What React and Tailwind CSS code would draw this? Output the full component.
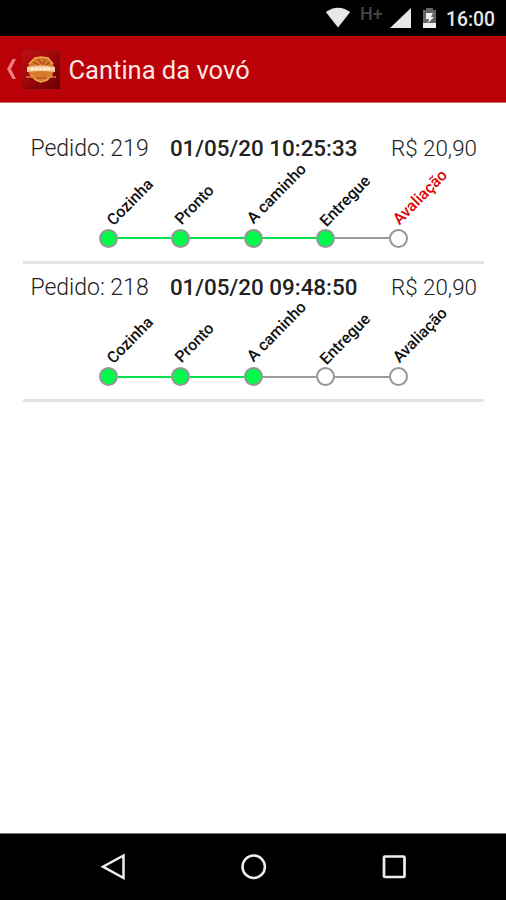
import clsx from 'clsx';

const orders = [
  { id: 219, date: '01/05/20 10:25:33', total: 'R$ 20,90', done: 4, pendingReview: true },
  { id: 218, date: '01/05/20 09:48:50', total: 'R$ 20,90', done: 3, pendingReview: false },
];

const steps = [
  { label: 'Cozinha', offset: 'bottom-[16px] left-[16px]' },
  { label: 'Pronto', offset: 'bottom-[17px] left-[12px]' },
  { label: 'A caminho', offset: 'bottom-[18px] left-[11px]' },
  { label: 'Entregue', offset: 'bottom-[15px] left-[12px]' },
  { label: 'Avaliação', offset: 'bottom-[17px] left-[12px]' },
];

function StatusBar() {
  return (
    <div className="flex h-9 shrink-0 items-center bg-black pl-[325px] text-[#e8e8e8]">
      <svg className="h-9 w-[115px]" viewBox="0 0 115 36">
        <path d="M0.8 12 Q13 3.5 25.2 12 L13 27.5 Z" fill="#e8e8e8" />
        <path d="M86 8 V28 H65 Z" fill="#e8e8e8" />
        {/* Battery */}
        <path d="M101 8 H108 V10 H111 V23 H98 V10 H101 Z" fill="#666" />
        <path d="M98 23 H111 V28 H98 Z" fill="#f0f0f0" />
        <path d="M101 13 H108 L106 17 H109 L103 23 L104 19 H101 Z" fill="#f0f0f0" />
        <text x="35" y="19.5" fill="#454545" fontFamily="Roboto, sans-serif" fontSize="18" fontWeight="500">
          H+
        </text>
      </svg>
      <span className="ml-[6px] pt-[3px] text-[19.3px] leading-9 font-medium">16:00</span>
    </div>
  );
}

function Logo() {
  return (
    <svg className="mt-[2px] h-10 w-10 shrink-0" viewBox="0 0 40 40">
      <defs>
        <linearGradient id="logoBg" x1="0" y1="0" x2="1" y2="1">
          <stop offset="0" stopColor="#c01013" />
          <stop offset="0.5" stopColor="#990608" />
          <stop offset="1" stopColor="#690002" />
        </linearGradient>
      </defs>
      <rect x="0.5" y="0.5" width="39" height="39" fill="url(#logoBg)" stroke="#a60d10" />
      <ellipse cx="20" cy="19" rx="13" ry="12" fill="#d9792b" />
      <path d="M8 14 L14 8 L20 7 L27 8 L32 14 M10 25 L15 30 L20 32 L26 30 L31 25" stroke="#edaa4d" strokeWidth="1.6" fill="none" />
      <path d="M12 12 L18 15 M17 9 L21 14 M24 9 L22 15 M29 12 L25 15 M15 28 L25 28" stroke="#a84518" strokeWidth="1.1" />
      <path d="M6 17 Q20 14 34 17 V22 Q20 20 6 22 Z" fill="#f1cfa0" />
      <path d="M10 19 H30" stroke="#fff0d5" strokeWidth="2" strokeDasharray="3 1" />
      <path d="M5 27 H15 M25 27 H35" stroke="#d38235" strokeWidth="1.5" />
    </svg>
  );
}

function Header() {
  return (
    <header className="flex h-[67px] shrink-0 items-center border-b border-[#cf6b6e] bg-[#b90107] pl-[6px]">
      <svg className="h-6 w-[15px] shrink-0" viewBox="0 0 15 24">
        <path d="M6.5 2 H10 L5 12 L10 22 H6.5 L1 12 Z" fill="#ef7d7f" />
      </svg>
      <Logo />
      <h1 className="ml-[7.5px] pt-[4px] text-[25.5px] leading-none text-[#ffe6e3]">Cantina da vovó</h1>
    </header>
  );
}

function Step({ step, index, done, highlight }) {
  const active = index < done;
  return (
    <>
      {index > 0 && (
        <div className={clsx('h-[2px] flex-1', active ? 'bg-[#08df4d]' : 'bg-[#999]')} />
      )}
      <div
        className={clsx(
          'relative h-[19px] w-[19px] shrink-0 rounded-full border-2 border-[#969696]',
          active ? 'bg-[#00fa4b]' : 'bg-white'
        )}
      >
        <span
          className={clsx(
            'absolute origin-bottom-left -rotate-[45.5deg] text-[16px] leading-5 font-medium whitespace-nowrap',
            step.offset,
            highlight ? 'text-[#dc0505]' : 'text-[#111]'
          )}
        >
          {step.label}
        </span>
      </div>
    </>
  );
}

function Order({ order }) {
  return (
    <li className="flex h-[138.5px] flex-col border-b-[3px] border-[#e3e3e3] px-[7px] pt-[9.4px]">
      <div className="flex items-baseline justify-between text-[22.4px] leading-7 text-[#222]">
        <span className="w-[139.5px] text-[23px] font-light">Pedido: {order.id}</span>
        <span className="flex-1 font-medium">{order.date}</span>
        <span className="font-light">{order.total}</span>
      </div>
      <div className="mt-[65.4px] ml-[68.2px] flex w-[309px] items-center">
        {steps.map((step, i) => (
          <Step
            key={step.label}
            step={step}
            index={i}
            done={order.done}
            highlight={order.pendingReview && i === steps.length - 1}
          />
        ))}
      </div>
    </li>
  );
}

function NavBar() {
  return (
    <nav className="flex h-[67px] shrink-0 items-center justify-between border-t border-[#777] bg-black pr-[99px] pl-[100px]">
      <svg className="h-[28px] w-[26px]" viewBox="0 0 26 28" fill="none" stroke="#eee" strokeWidth="2.5">
        <path d="M23.5 2.5 V25 L3 13.7 Z" />
      </svg>
      <svg className="h-[26px] w-[26px]" viewBox="0 0 26 26" fill="none" stroke="#eee" strokeWidth="2.5">
        <circle cx="12.7" cy="12.7" r="11.2" />
      </svg>
      <svg className="h-[26px] w-[26px]" viewBox="0 0 26 26" fill="none" stroke="#eee" strokeWidth="2.7">
        <rect x="3" y="2.5" width="20.5" height="20.5" rx="1" />
      </svg>
    </nav>
  );
}

export default function App() {
  return (
    <div className="flex h-[900px] w-[506px] flex-col overflow-hidden bg-white font-[Roboto,sans-serif]">
      <StatusBar />
      <Header />
      <main className="flex-1 pt-[22px] pr-[22px] pl-[23.4px]">
        <ul>
          {orders.map((order) => (
            <Order key={order.id} order={order} />
          ))}
        </ul>
      </main>
      <NavBar />
    </div>
  );
}
